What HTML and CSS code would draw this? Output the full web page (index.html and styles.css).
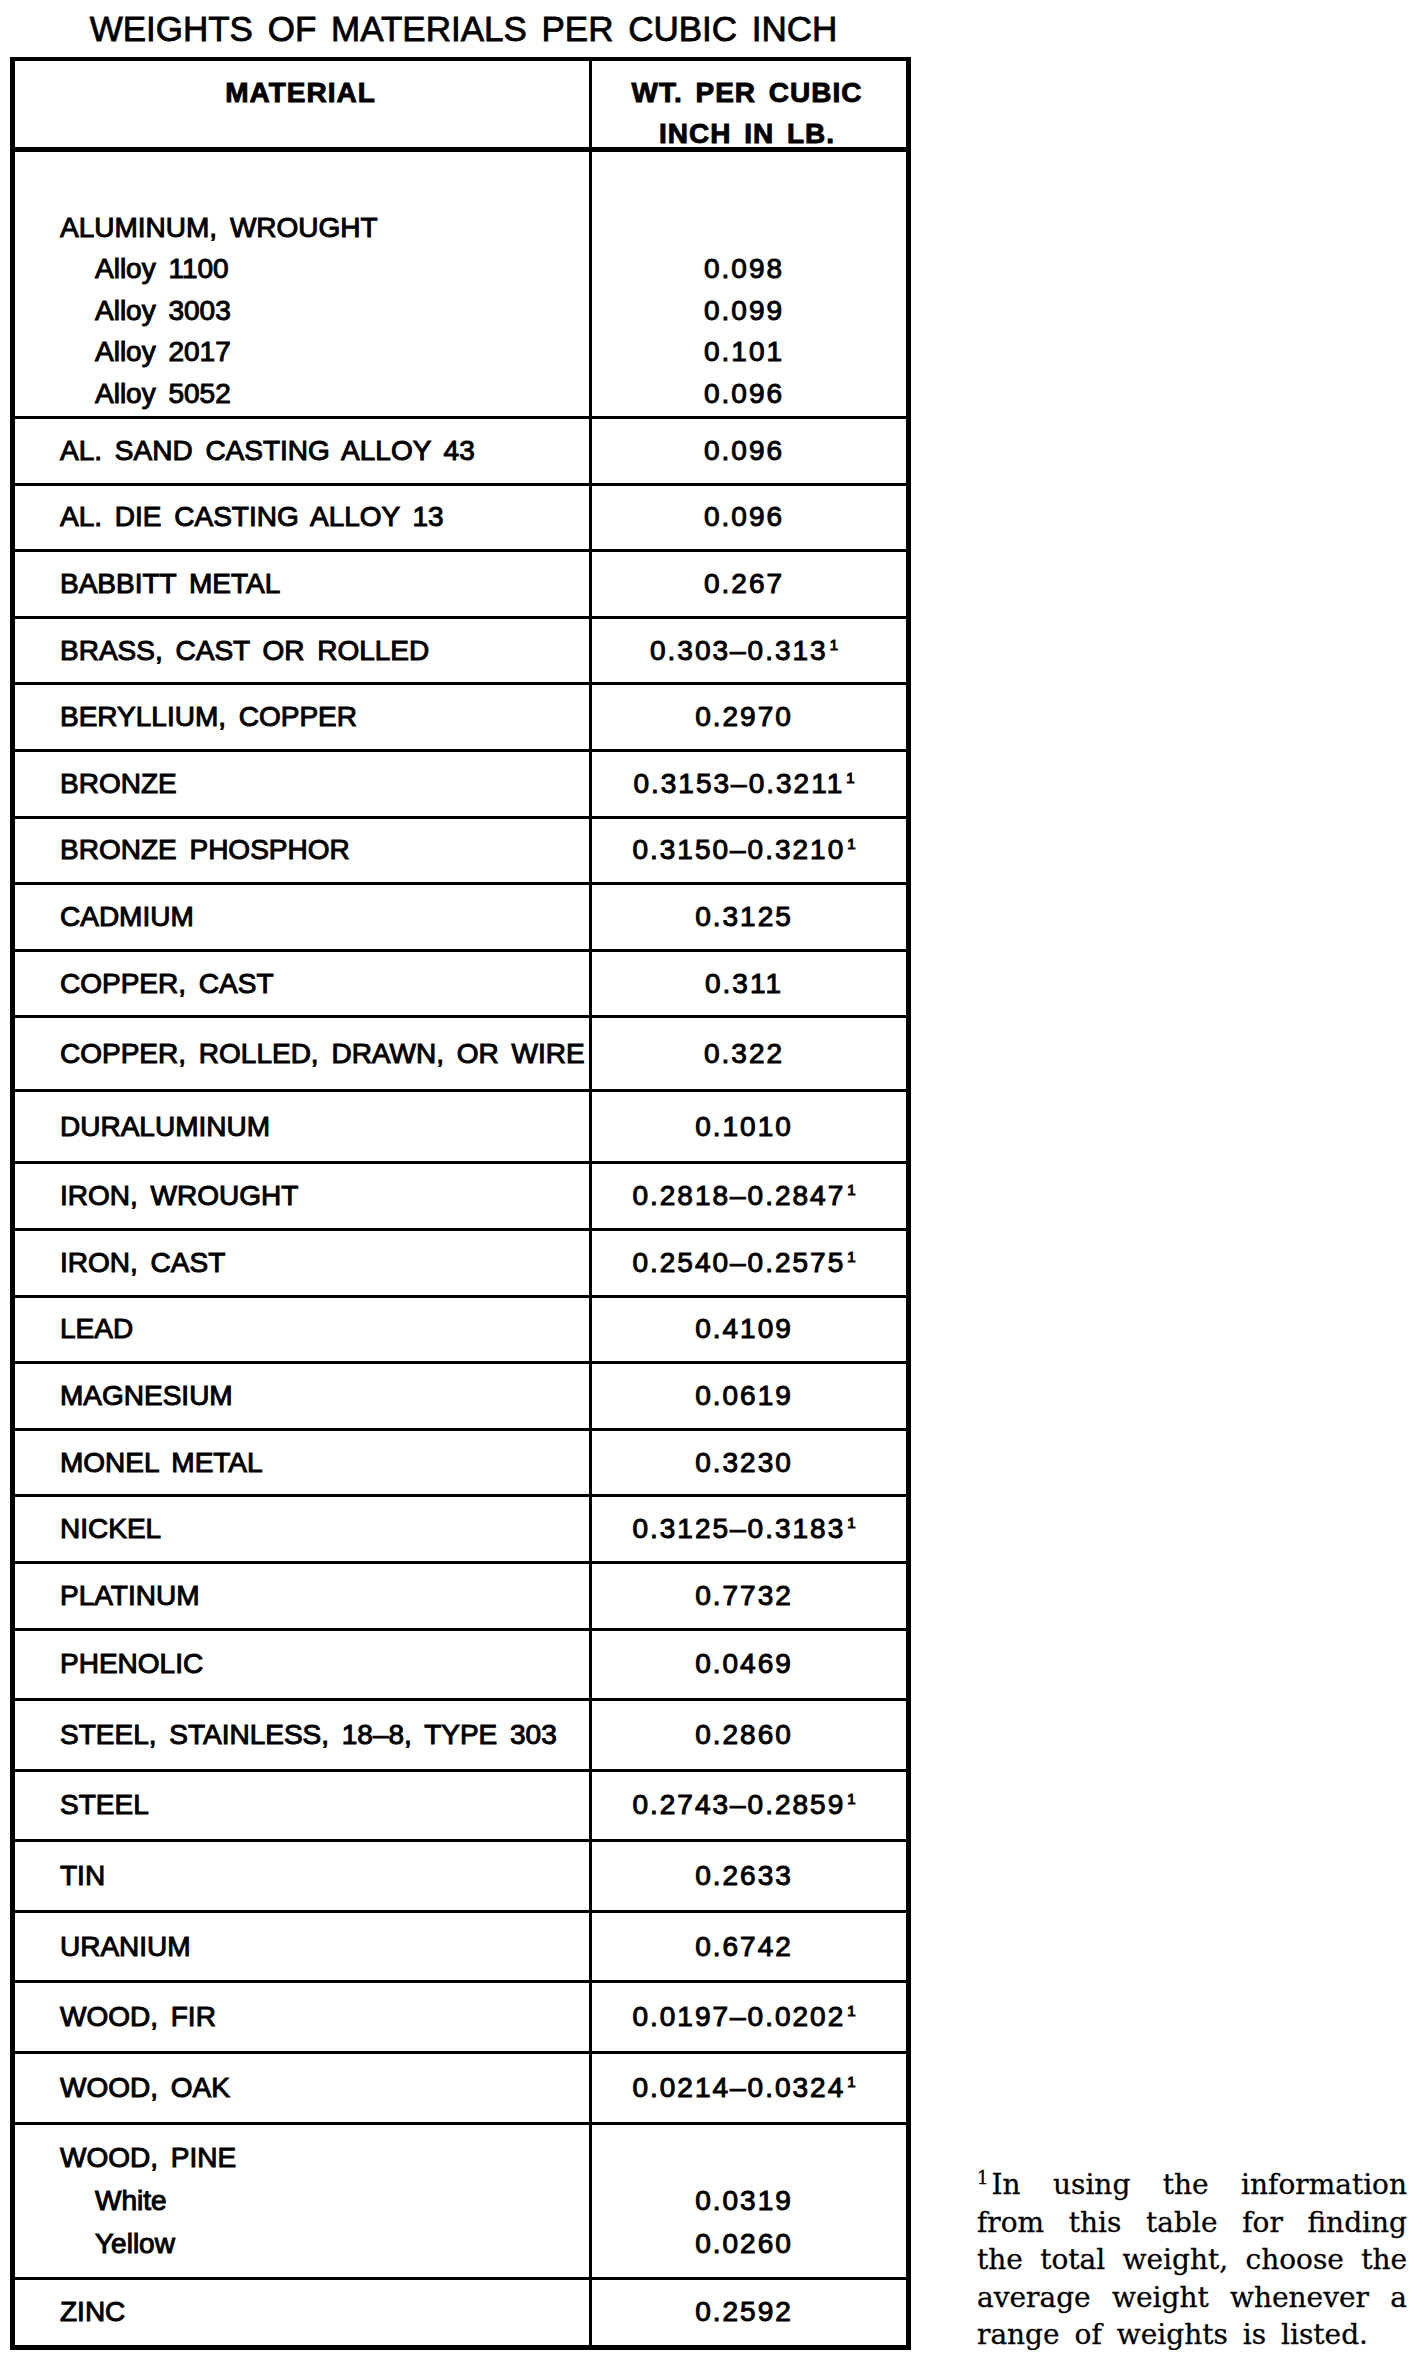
FILE: index.html
```html
<!DOCTYPE html>
<html lang="en">
<head>
<meta charset="utf-8">
<title>Weights of Materials per Cubic Inch</title>
<link rel="stylesheet" href="styles.css">
</head>
<body>
<div class="page">
  <div class="main">
    <h1 class="title">WEIGHTS OF MATERIALS PER CUBIC INCH</h1>
    <div class="table">
      <div class="row head">
        <div class="cell mat">MATERIAL</div>
        <div class="cell val"><span>WT. PER CUBIC</span><span>INCH IN LB.</span></div>
      </div>
      <div class="row group">
        <div class="cell mat">
          <div class="ln">ALUMINUM, WROUGHT</div>
          <div class="ln sub">Alloy 1100</div>
          <div class="ln sub">Alloy 3003</div>
          <div class="ln sub">Alloy 2017</div>
          <div class="ln sub">Alloy 5052</div>
        </div>
        <div class="cell val">
          <div class="ln">&nbsp;</div>
          <div class="ln">0.098</div>
          <div class="ln">0.099</div>
          <div class="ln">0.101</div>
          <div class="ln">0.096</div>
        </div>
      </div>
      <div class="row"><div class="cell mat">AL. SAND CASTING ALLOY 43</div><div class="cell val">0.096</div></div>
      <div class="row"><div class="cell mat">AL. DIE CASTING ALLOY 13</div><div class="cell val">0.096</div></div>
      <div class="row"><div class="cell mat">BABBITT METAL</div><div class="cell val">0.267</div></div>
      <div class="row"><div class="cell mat">BRASS, CAST OR ROLLED</div><div class="cell val"><span>0.303–0.313<sup class="fn">1</sup></span></div></div>
      <div class="row"><div class="cell mat">BERYLLIUM, COPPER</div><div class="cell val">0.2970</div></div>
      <div class="row"><div class="cell mat">BRONZE</div><div class="cell val"><span>0.3153–0.3211<sup class="fn">1</sup></span></div></div>
      <div class="row"><div class="cell mat">BRONZE PHOSPHOR</div><div class="cell val"><span>0.3150–0.3210<sup class="fn">1</sup></span></div></div>
      <div class="row"><div class="cell mat">CADMIUM</div><div class="cell val">0.3125</div></div>
      <div class="row"><div class="cell mat">COPPER, CAST</div><div class="cell val">0.311</div></div>
      <div class="row tall1"><div class="cell mat">COPPER, ROLLED, DRAWN, OR WIRE</div><div class="cell val">0.322</div></div>
      <div class="row tall2"><div class="cell mat">DURALUMINUM</div><div class="cell val">0.1010</div></div>
      <div class="row"><div class="cell mat">IRON, WROUGHT</div><div class="cell val"><span>0.2818–0.2847<sup class="fn">1</sup></span></div></div>
      <div class="row"><div class="cell mat">IRON, CAST</div><div class="cell val"><span>0.2540–0.2575<sup class="fn">1</sup></span></div></div>
      <div class="row"><div class="cell mat">LEAD</div><div class="cell val">0.4109</div></div>
      <div class="row"><div class="cell mat">MAGNESIUM</div><div class="cell val">0.0619</div></div>
      <div class="row"><div class="cell mat">MONEL METAL</div><div class="cell val">0.3230</div></div>
      <div class="row"><div class="cell mat">NICKEL</div><div class="cell val"><span>0.3125–0.3183<sup class="fn">1</sup></span></div></div>
      <div class="row"><div class="cell mat">PLATINUM</div><div class="cell val">0.7732</div></div>
      <div class="row loose"><div class="cell mat">PHENOLIC</div><div class="cell val">0.0469</div></div>
      <div class="row loose"><div class="cell mat">STEEL, STAINLESS, 18–8, TYPE 303</div><div class="cell val">0.2860</div></div>
      <div class="row loose"><div class="cell mat">STEEL</div><div class="cell val"><span>0.2743–0.2859<sup class="fn">1</sup></span></div></div>
      <div class="row loose"><div class="cell mat">TIN</div><div class="cell val">0.2633</div></div>
      <div class="row loose"><div class="cell mat">URANIUM</div><div class="cell val">0.6742</div></div>
      <div class="row loose"><div class="cell mat">WOOD, FIR</div><div class="cell val"><span>0.0197–0.0202<sup class="fn">1</sup></span></div></div>
      <div class="row loose"><div class="cell mat">WOOD, OAK</div><div class="cell val"><span>0.0214–0.0324<sup class="fn">1</sup></span></div></div>
      <div class="row pine">
        <div class="cell mat">
          <div class="ln">WOOD, PINE</div>
          <div class="ln sub">White</div>
          <div class="ln sub">Yellow</div>
        </div>
        <div class="cell val">
          <div class="ln">&nbsp;</div>
          <div class="ln">0.0319</div>
          <div class="ln">0.0260</div>
        </div>
      </div>
      <div class="row last"><div class="cell mat">ZINC</div><div class="cell val">0.2592</div></div>
    </div>
  </div>
  <p class="note">
    <span class="nl"><sup class="nfn">1</sup>In using the information</span>
    <span class="nl">from this table for finding</span>
    <span class="nl">the total weight, choose the</span>
    <span class="nl">average weight whenever a</span>
    <span class="nl end">range of weights is listed.</span>
  </p>
</div>
</body>
</html>
```

FILE: styles.css
```css
html, body {
  margin: 0;
  padding: 0;
  background: #ffffff;
  color: #000000;
}

.page {
  display: flex;
  align-items: flex-end;
  width: 1410px;
}

.main {
  width: 901px;
  margin-left: 10px;
  flex: none;
}

.title {
  margin: 0;
  height: 57px;
  padding-left: 6px;
  font-family: "Liberation Sans", Arial, sans-serif;
  font-weight: 400;
  font-size: 35px;
  line-height: 57px;
  text-align: center;
  word-spacing: 5px;
  white-space: nowrap;
  -webkit-text-stroke: 0.8px #000;
}

.table {
  border: 5px solid #000;
  border-top-width: 4px;
  font-family: "Liberation Sans", Arial, sans-serif;
  font-size: 28px;
  -webkit-text-stroke: 1px #000;
}

.row {
  display: grid;
  grid-template-columns: 577px 314px;
  box-sizing: border-box;
  height: 66.6px;
  border-top: 3px solid #000;
}

.row.head {
  border-top: 0;
  height: 86px;
}

.row.group {
  border-top-width: 5px;
  height: 269px;
}

.row.tall1 { height: 74px; }
.row.tall2 { height: 72px; }
.row.loose { height: 70.6px; }
.row.pine { height: 155px; }
.row.last { height: 68px; }

.cell {
  display: flex;
  flex-direction: column;
  justify-content: center;
  white-space: nowrap;
  line-height: 32px;
}

.cell.mat {
  border-right: 3px solid #000;
  padding-left: 45px;
  word-spacing: 5px;
}

.cell.val {
  text-align: center;
  padding-right: 10px;
  letter-spacing: 2px;
}

.fn {
  font-size: 15px;
  line-height: 0;
  vertical-align: 10px;
  letter-spacing: 0;
  margin-left: 2px;
}

.row.head .cell {
  justify-content: flex-start;
  padding-top: 11px;
  line-height: 41px;
  font-weight: 700;
  letter-spacing: 1px;
  word-spacing: 4px;
  text-align: center;
  -webkit-text-stroke: 0.9px #000;
}

.row.head .cell.mat {
  padding-left: 0;
  padding-right: 3px;
}

.row.head .cell.val {
  padding-right: 4px;
}

.row.group .cell {
  justify-content: flex-start;
  padding-top: 54.5px;
  line-height: 41.6px;
}

.row.pine .cell {
  line-height: 43px;
}

.sub {
  padding-left: 35px;
}

.note {
  width: 430px;
  margin: 0 0 -4px 66px;
  font-family: "DejaVu Serif", "Liberation Serif", serif;
  font-size: 28px;
  line-height: 37.5px;
  -webkit-text-stroke: 0.3px #000;
  flex: none;
}

.nl {
  display: block;
  text-align: justify;
  text-align-last: justify;
  white-space: nowrap;
}

.nl.end {
  width: 391px;
}

.nfn {
  font-size: 18px;
  line-height: 0;
  vertical-align: 10px;
  margin-right: 3px;
}
```
